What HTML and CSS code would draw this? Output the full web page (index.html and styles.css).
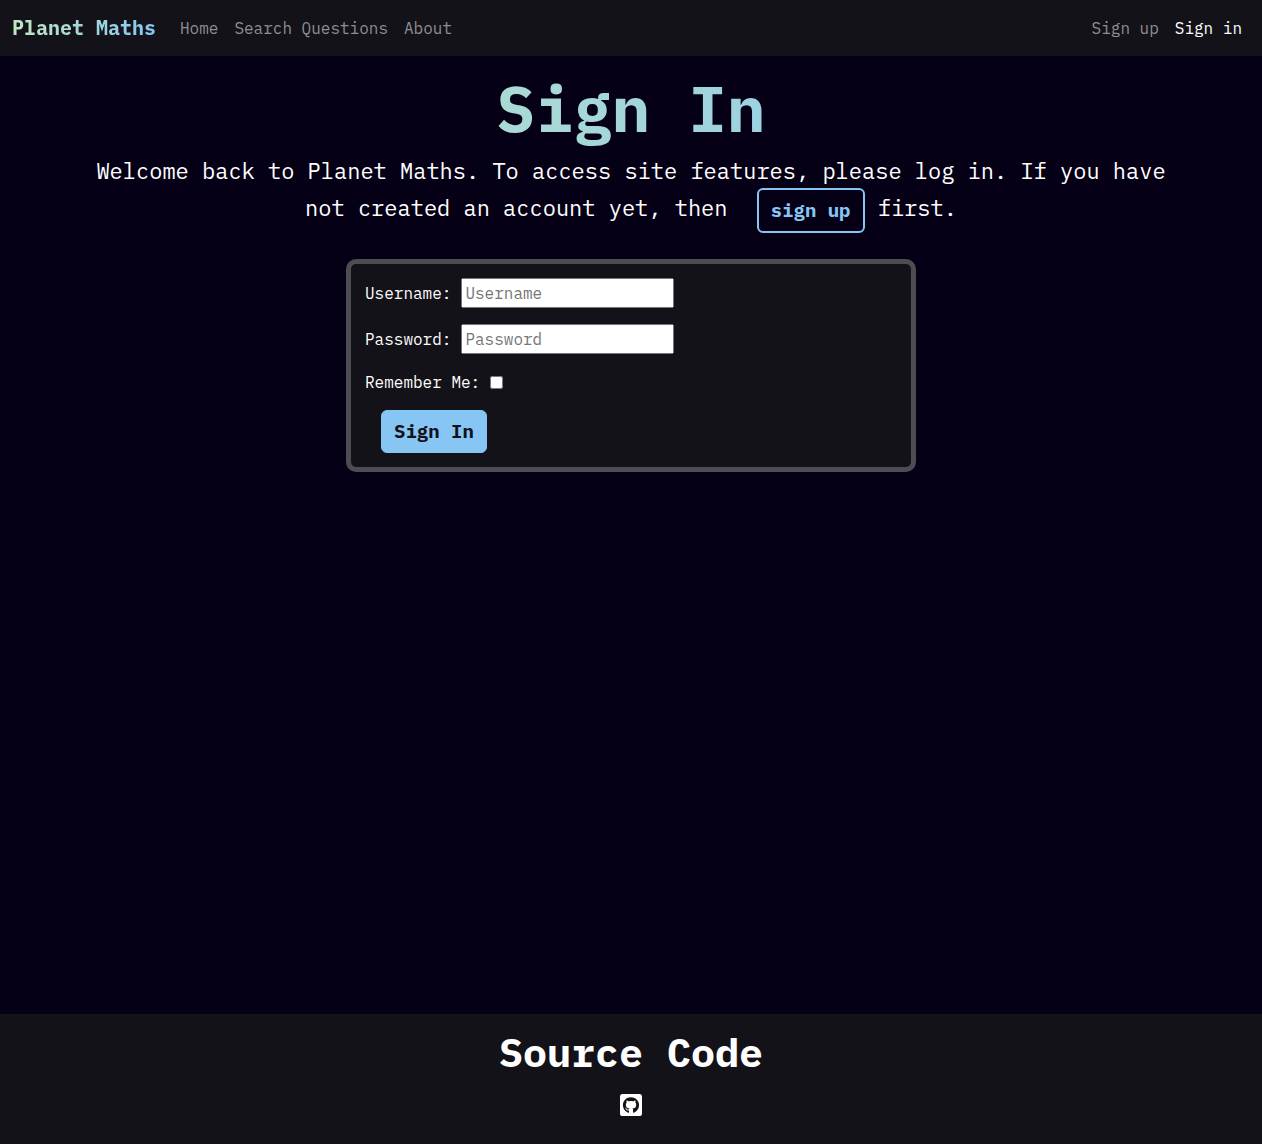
FILE: index.html
```
<!DOCTYPE html>
<html lang="en">
<head>
  <meta charset="utf-8">
  <meta name="viewport" content="width=device-width, initial-scale=1">
  <title>Sign In</title>
  <link rel="stylesheet" href="styles.css">
</head>
<body>
  <header class="navbar">
    <a class="brand" href="#">Planet Maths</a>
    <nav class="nav-links">
      <a href="#">Home</a>
      <a href="#">Search Questions</a>
      <a href="#">About</a>
    </nav>
    <nav class="nav-links nav-account">
      <a href="#">Sign up</a>
      <a class="active" href="#">Sign in</a>
    </nav>
  </header>

  <main class="content">
    <h1 class="title">Sign In</h1>
    <p class="intro">Welcome back to Planet Maths. To access site features, please log in. If you have not created an account yet, then <a class="btn btn-outline" href="#">sign up</a> first.</p>

    <form class="card">
      <div class="field">
        <label for="username">Username:</label>
        <input class="text-input" id="username" type="text" placeholder="Username">
      </div>
      <div class="field">
        <label for="password">Password:</label>
        <input class="text-input" id="password" type="password" placeholder="Password">
      </div>
      <div class="field">
        <label for="remember">Remember Me:</label>
        <input class="checkbox" id="remember" type="checkbox">
      </div>
      <button class="btn btn-solid" type="submit">Sign In</button>
    </form>
  </main>

  <footer class="footer">
    <h2 class="footer-title">Source Code</h2>
    <a class="footer-link" href="#" aria-label="GitHub">
      <svg class="icon" viewBox="0 32 448 448" aria-hidden="true"><path fill="currentColor" d="M400 32H48C21.5 32 0 53.5 0 80v352c0 26.5 21.5 48 48 48h352c26.5 0 48-21.5 48-48V80c0-26.5-21.5-48-48-48zM277.3 415.7c-8.4 1.5-11.5-3.7-11.5-8 0-5.4.2-33 .2-55.3 0-15.6-5.2-25.5-11.3-30.7 37-4.1 76-9.2 76-73.1 0-18.2-6.5-27.3-17.1-39 1.7-4.3 7.4-22-1.7-45-13.9-4.3-45.7 17.9-45.7 17.9-13.2-3.7-27.5-5.6-41.6-5.6-14.1 0-28.4 1.9-41.6 5.6 0 0-31.8-22.2-45.7-17.9-9.1 22.9-3.5 40.6-1.7 45-10.6 11.7-15.6 20.8-15.6 39 0 63.6 37.3 69 74.3 73.1-4.8 4.3-9.1 11.7-10.6 22.3-9.5 4.3-33.8 11.7-48.3-13.9-9.1-15.8-25.5-17.1-25.5-17.1-16.2-.2-1.1 10.2-1.1 10.2 10.8 5 18.4 24.2 18.4 24.2 9.7 29.7 56.1 19.7 56.1 19.7 0 13.9.2 36.5.2 40.6 0 4.3-3 9.5-11.5 8-66-22.1-112.2-84.9-112.2-158.3 0-91.8 70.2-161.5 162-161.5S388 165.6 388 257.4c.1 73.4-44.7 136.3-110.7 158.3z"/></svg>
    </a>
  </footer>
</body>
</html>
```
FILE: styles.css
```
* {
  box-sizing: border-box;
}

body {
  margin: 0;
  min-height: 100vh;
  display: flex;
  flex-direction: column;
  background: #050015;
  color: #fff;
  font: 16px/24px "IBM Plex Mono", "Liberation Mono", monospace;
}

a {
  color: inherit;
  text-decoration: none;
}

.navbar {
  display: flex;
  align-items: center;
  gap: 24px;
  min-height: 56px;
  padding: 0 20px 0 12px;
  background: #131218;
}

.brand,
.title {
  background: linear-gradient(to right, #c1e7c0, #86c5f4);
  -webkit-background-clip: text;
  background-clip: text;
  color: transparent;
  font-weight: 700;
}

.brand {
  font-size: 20px;
}

.nav-links {
  display: flex;
  gap: 16px;
  color: #8f8e92;
}

.nav-account {
  margin-left: auto;
}

.active {
  color: #fff;
}

.content {
  flex: 1;
  padding: 14px 72px 24px;
}

.title {
  margin: 0;
  font-size: 64px;
  line-height: 76px;
  text-align: center;
}

.intro {
  margin: 8px 0 26px;
  font-size: 22px;
  line-height: 34px;
  text-align: center;
}

.btn {
  display: inline-block;
  margin-left: 16px;
  padding: 8px 12px;
  border: 1px solid #86c5f4;
  border-radius: 6px;
  font: 700 19px/25px "IBM Plex Mono", "Liberation Mono", monospace;
}

.btn-outline {
  border-width: 2px;
  color: #86c5f4;
  vertical-align: middle;
}

.btn-solid {
  background: #86c5f4;
  color: #131218;
}

.card {
  width: 100%;
  max-width: 570px;
  margin: 0 auto;
  padding: 14px;
  border: 5px solid #4d4c50;
  border-radius: 10px;
  background: #131218;
}

.field {
  display: flex;
  align-items: center;
  gap: 10px;
  margin-bottom: 16px;
}

.text-input {
  width: 213px;
  height: 30px;
  font: inherit;
}

.checkbox {
  width: 13px;
  height: 13px;
  margin: 0;
}

.footer {
  display: flex;
  flex-direction: column;
  align-items: center;
  gap: 18px;
  padding: 14px 16px 28px;
  background: #131218;
}

.footer-title {
  margin: 0;
  font-size: 40px;
  line-height: 48px;
}

.footer-link {
  display: flex;
}

.icon {
  width: 22px;
  height: 22px;
}
```
